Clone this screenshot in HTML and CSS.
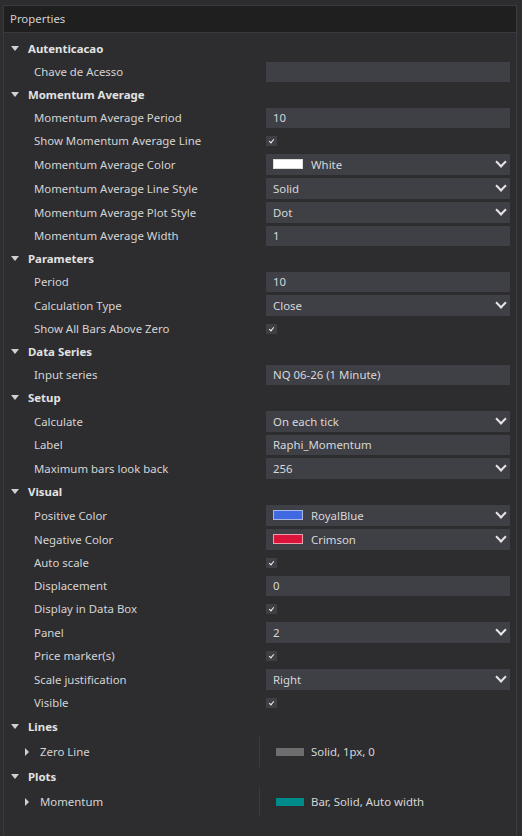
FILE: index.html
```html
<!DOCTYPE html>
<html lang="en">
<head>
    <meta charset="UTF-8">
    <title>Properties</title>
    <link rel="stylesheet" href="styles.css">
</head>
<body>

<div class="panel">
    <div class="panel-title">Properties</div>

    <!-- Autenticacao -->
    <div class="section-head"><span class="caret-down"></span>Autenticacao</div>
    <div class="row"><div class="label">Chave de Acesso</div><div class="value"><div class="input"></div></div></div>

    <!-- Momentum Average -->
    <div class="section-head"><span class="caret-down"></span>Momentum Average</div>
    <div class="row"><div class="label">Momentum Average Period</div><div class="value"><div class="input">10</div></div></div>
    <div class="row"><div class="label">Show Momentum Average Line</div><div class="value"><span class="check"></span></div></div>
    <div class="row combo-row"><div class="label">Momentum Average Color</div><div class="value"><div class="input combo"><span class="swatch white"></span>White<span class="chev"></span></div></div></div>
    <div class="row combo-row"><div class="label">Momentum Average Line Style</div><div class="value"><div class="input combo">Solid<span class="chev"></span></div></div></div>
    <div class="row combo-row"><div class="label">Momentum Average Plot Style</div><div class="value"><div class="input combo">Dot<span class="chev"></span></div></div></div>
    <div class="row"><div class="label">Momentum Average Width</div><div class="value"><div class="input">1</div></div></div>

    <!-- Parameters -->
    <div class="section-head"><span class="caret-down"></span>Parameters</div>
    <div class="row"><div class="label">Period</div><div class="value"><div class="input">10</div></div></div>
    <div class="row combo-row"><div class="label">Calculation Type</div><div class="value"><div class="input combo">Close<span class="chev"></span></div></div></div>
    <div class="row"><div class="label">Show All Bars Above Zero</div><div class="value"><span class="check"></span></div></div>

    <!-- Data Series -->
    <div class="section-head"><span class="caret-down"></span>Data Series</div>
    <div class="row"><div class="label">Input series</div><div class="value"><div class="input">NQ 06-26 (1 Minute)</div></div></div>

    <!-- Setup -->
    <div class="section-head"><span class="caret-down"></span>Setup</div>
    <div class="row combo-row"><div class="label">Calculate</div><div class="value"><div class="input combo">On each tick<span class="chev"></span></div></div></div>
    <div class="row"><div class="label">Label</div><div class="value"><div class="input">Raphi_Momentum</div></div></div>
    <div class="row combo-row"><div class="label">Maximum bars look back</div><div class="value"><div class="input combo">256<span class="chev"></span></div></div></div>

    <!-- Visual -->
    <div class="section-head"><span class="caret-down"></span>Visual</div>
    <div class="row combo-row"><div class="label">Positive Color</div><div class="value"><div class="input combo"><span class="swatch blue"></span>RoyalBlue<span class="chev"></span></div></div></div>
    <div class="row combo-row"><div class="label">Negative Color</div><div class="value"><div class="input combo"><span class="swatch crimson"></span>Crimson<span class="chev"></span></div></div></div>
    <div class="row"><div class="label">Auto scale</div><div class="value"><span class="check"></span></div></div>
    <div class="row"><div class="label">Displacement</div><div class="value"><div class="input">0</div></div></div>
    <div class="row"><div class="label">Display in Data Box</div><div class="value"><span class="check"></span></div></div>
    <div class="row combo-row"><div class="label">Panel</div><div class="value"><div class="input combo">2<span class="chev"></span></div></div></div>
    <div class="row"><div class="label">Price marker(s)</div><div class="value"><span class="check"></span></div></div>
    <div class="row combo-row"><div class="label">Scale justification</div><div class="value"><div class="input combo">Right<span class="chev"></span></div></div></div>
    <div class="row"><div class="label">Visible</div><div class="value"><span class="check"></span></div></div>

    <!-- Lines -->
    <div class="section-head tall"><span class="caret-down"></span>Lines</div>
    <div class="row tall"><div class="label sub"><span class="caret-right"></span>Zero Line</div><div class="value plain"><span class="bar gray"></span>Solid, 1px, 0</div></div>

    <!-- Plots -->
    <div class="section-head tall"><span class="caret-down"></span>Plots</div>
    <div class="row tall"><div class="label sub"><span class="caret-right"></span>Momentum</div><div class="value plain"><span class="bar teal"></span>Bar, Solid, Auto width</div></div>
</div>

</body>
</html>
```

FILE: styles.css
```css
/* Basic styling */
html, body { margin: 0; height: 100%; }
body {
    background-color: #2d2d30;
    color: #d6d6d6;
    font-family: "Noto Sans", "Open Sans", sans-serif;
    font-size: 11.4px;
    overflow: hidden;
}

/* Panel */
.panel {
    margin: 5px 5px 0 3px;
    border-left: 1px solid #3a3a3e;
    border-right: 1px solid #3e3e42;
    min-height: 831px;
}
.panel-title {
    background-color: #1f1f1f;
    border-top: 1px solid #3a3a3e;
    border-bottom: 1px solid #3a3a3e;
    height: 26px;
    line-height: 26px;
    padding-left: 6px;
    color: #d0d0d0;
    margin-bottom: 4px;
}

/* Section headers */
.section-head {
    height: 23px;
    line-height: 23px;
    font-weight: bold;
    color: #e2e2e2;
    display: flex;
    align-items: center;
    padding-left: 7px;
}
.section-head.tall { height: 25px; }
.caret-down {
    width: 0; height: 0;
    border-left: 4px solid transparent;
    border-right: 4px solid transparent;
    border-top: 5px solid #d0d0d0;
    margin-right: 9px;
}
.caret-right {
    width: 0; height: 0;
    border-top: 4px solid transparent;
    border-bottom: 4px solid transparent;
    border-left: 4px solid #d0d0d0;
    margin-right: 11px;
}

/* Property rows */
.row { display: flex; height: 23px; align-items: center; }
.row.combo-row { height: 24px; }
.row.tall { height: 25px; }
.label {
    width: 228px;
    padding-left: 30px;
    white-space: nowrap;
    color: #d4d4d4;
}
.label.sub {
    display: flex;
    align-items: center;
    padding-left: 21px;
    width: 234px;
    height: 30px;
    border-right: 1px solid #3c3c40;
}
.value {
    flex: 1;
    padding: 0 6px 0 4px;
    display: flex;
    align-items: center;
}
.value.plain { padding-left: 16px; color: #d6d6d6; }

.input {
    flex: 1;
    background-color: #3f3f46;
    height: 20px;
    line-height: 20px;
    padding-left: 7px;
    color: #d8d8d8;
}
.combo-row .input { height: 21px; line-height: 21px; }
.combo { display: flex; align-items: center; }
.chev {
    margin-left: auto;
    margin-right: 5px;
    width: 6px;
    height: 6px;
    border-right: 2px solid #e6e6e6;
    border-bottom: 2px solid #e6e6e6;
    transform: translateY(-2px) rotate(45deg);
}

/* Swatches */
.swatch {
    width: 28px;
    height: 8px;
    margin-right: 8px;
    border: 1px solid #dcdcdc;
}
.swatch.white { background-color: #ffffff; }
.swatch.blue { background-color: #4169e1; border-color: #a8b6e6; }
.swatch.crimson { background-color: #dc143c; border-color: #e8a0ae; }
.bar { width: 28px; height: 8px; margin-right: 7px; }
.bar.gray { background-color: #6e6e6e; }
.bar.teal { background-color: #008b8b; }

/* Checkbox */
.check {
    width: 11px;
    height: 10px;
    background-color: #3f3f46;
    position: relative;
    margin-top: 1px;
}
.check::after {
    content: "";
    position: absolute;
    left: 3.5px;
    top: 1.5px;
    width: 2px;
    height: 4px;
    border-right: 1.5px solid #f0f0f0;
    border-bottom: 1.5px solid #f0f0f0;
    transform: rotate(40deg);
}
```
